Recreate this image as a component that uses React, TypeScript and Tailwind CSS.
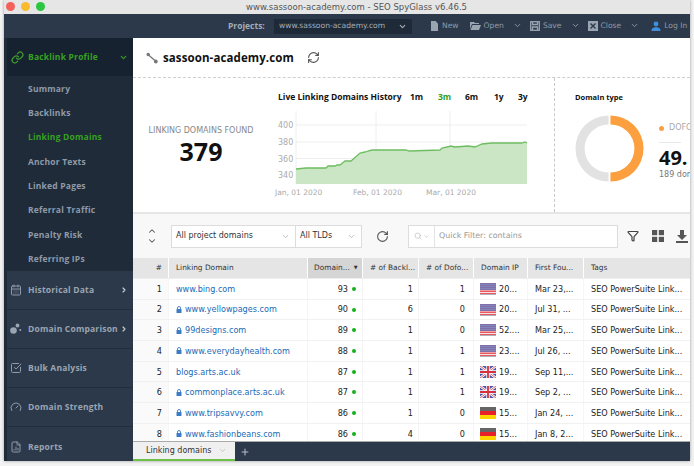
import { ChevronDown, ChevronRight, ChevronUp, Link, CalendarDays, SquareCheckBig, Gauge, FileChartColumn, RefreshCw, RotateCw, Search, Funnel, Plus } from 'lucide-react';

const subItems = ['Summary', 'Backlinks', 'Linking Domains', 'Anchor Texts', 'Linked Pages', 'Referral Traffic', 'Penalty Risk', 'Referring IPs'];

const rows = [
  { n: 1, domain: 'www.bing.com', lock: false, score: 93, back: 1, dofo: 1, flag: 'us', ip: '20...', date: 'Mar 23,...' },
  { n: 2, domain: 'www.yellowpages.com', lock: true, score: 90, back: 6, dofo: 0, flag: 'us', ip: '20...', date: 'Jul 31, ...' },
  { n: 3, domain: '99designs.com', lock: true, score: 89, back: 1, dofo: 0, flag: 'us', ip: '52....', date: 'Mar 25,...' },
  { n: 4, domain: 'www.everydayhealth.com', lock: true, score: 88, back: 1, dofo: 1, flag: 'us', ip: '23....', date: 'Jul 26, ...' },
  { n: 5, domain: 'blogs.arts.ac.uk', lock: false, score: 87, back: 1, dofo: 1, flag: 'uk', ip: '19...', date: 'Sep 11,...' },
  { n: 6, domain: 'commonplace.arts.ac.uk', lock: true, score: 87, back: 1, dofo: 1, flag: 'uk', ip: '19...', date: 'Sep 2, ...' },
  { n: 7, domain: 'www.tripsavvy.com', lock: true, score: 86, back: 1, dofo: 0, flag: 'de', ip: '15...', date: 'Jan 24, ...' },
  { n: 8, domain: 'www.fashionbeans.com', lock: true, score: 86, back: 4, dofo: 0, flag: 'de', ip: '15...', date: 'Jan 8, 2...' },
];

const linePoints = '29,66 39,65 59,65 61,63 68,63 70,62 73,62 78,58 84,58 93,50 98,49 101,48 105,47 139,47 142,48 173,47 175,45 184,43 188,44 201,43 208,44 215,41 225,40 255,40 258,39 260,40';

function Flag({ kind }: { kind: string }) {
  if (kind === 'us') {
    return (
      <svg width="16" height="12" viewBox="0 0 16 12" className="shrink-0">
        <rect width="16" height="12" fill="#f6f0f2" />
        {[0, 2, 4, 6, 8, 10].map((y) => (
          <rect key={y} y={y} width="16" height="1.1" fill="#e8585f" />
        ))}
        <rect width="16" height="7" fill="#6d74b4" opacity="0.85" />
        <rect y="7" width="16" height="1" fill="#f0a0a4" />
        <rect y="11" width="16" height="1" fill="#b0b0b8" />
      </svg>
    );
  }
  if (kind === 'uk') {
    return (
      <svg width="16" height="12" viewBox="0 0 16 12" className="shrink-0">
        <rect width="16" height="12" fill="#4a5aa8" />
        <path d="M0 0L16 12M16 0L0 12" stroke="#fff" strokeWidth="2.4" />
        <path d="M0 0L16 12M16 0L0 12" stroke="#d8404a" strokeWidth="0.8" />
        <path d="M8 0V12M0 6H16" stroke="#fff" strokeWidth="3.4" />
        <path d="M8 0V12M0 6H16" stroke="#d8303c" strokeWidth="1.8" />
      </svg>
    );
  }
  return (
    <svg width="16" height="12" viewBox="0 0 16 12" className="shrink-0">
      <rect width="16" height="4" fill="#666" />
      <rect y="4" width="16" height="4" fill="#e8202a" />
      <rect y="8" width="16" height="4" fill="#fcd400" />
    </svg>
  );
}

function Lock() {
  return (
    <svg width="6" height="7" viewBox="0 0 6 7" className="shrink-0">
      <rect x="0.5" y="3" width="5" height="4" rx="0.5" fill="#3b7cc4" />
      <path d="M1.5 3V2a1.5 1.5 0 0 1 3 0v1" fill="none" stroke="#3b7cc4" strokeWidth="0.9" />
    </svg>
  );
}

function ToolItem({ icon, label, arrow, className }: { icon: React.ReactNode; label: string; arrow?: boolean; className?: string }) {
  return (
    <div className={`flex shrink-0 items-center gap-[3px] whitespace-nowrap ${className ?? ''}`}>
      {icon}
      <span className="text-[7.6px] text-[#8e99a8]">{label}</span>
      {arrow && <ChevronDown className="ml-[6px] h-[9px] w-[9px] text-[#8e99a8]" strokeWidth={2.5} />}
    </div>
  );
}

function NavItem({ icon, label, arrow }: { icon: React.ReactNode; label: string; arrow?: boolean }) {
  return (
    <div className="flex h-[39px] items-center border-b border-[#222e3c] pl-[2px] last:border-b-0">
      <div className="flex w-[14px] justify-center text-[#8f9aa8]">{icon}</div>
      <span className="ml-[5px] whitespace-nowrap font-['Open_Sans',sans-serif] text-[8.5px] font-bold tracking-[0.2px] text-[#9aa5b2]">{label}</span>
      {arrow && <ChevronRight className="ml-auto mr-[5px] h-[8px] w-[8px] text-[#c4ccd6]" strokeWidth={3.5} />}
    </div>
  );
}

const gridCols = 'grid-cols-[35px_138px_54px_55px_54px_53px_55px_1fr]';

export default function App() {
  return (
    <div className="h-[466px] w-[694px] overflow-hidden bg-[#f3f3f3] px-[4px] pb-[5px] font-['DejaVu_Sans',sans-serif]">
      <div className="flex h-[461px] w-[686px] flex-col overflow-hidden shadow-[0_0_3px_rgba(0,0,0,0.35)]">
        {/* Title bar */}
        <div className="relative flex h-[14px] shrink-0 items-center justify-center bg-[#e6e6e6] text-[8.5px] text-[#555]">
          <div className="absolute left-[2px] top-[2px] flex gap-[6px]">
            <span className="h-[9px] w-[9px] rounded-full bg-[#f4605a]" />
            <span className="h-[9px] w-[9px] rounded-full bg-[#f8bb2e]" />
            <span className="h-[9px] w-[9px] rounded-full bg-[#2bc740]" />
          </div>
          <span className="ml-[19px]">www.sassoon-academy.com - SEO SpyGlass v6.46.5</span>
        </div>

        {/* Top toolbar */}
        <div className="flex h-[24px] shrink-0 items-center bg-[#2c394a]">
          <span className="ml-[224px] w-[36px] shrink-0 whitespace-nowrap font-['Open_Sans',sans-serif] text-[8.5px] font-bold text-[#a4adb9]">Projects:</span>
          <div className="ml-[10px] flex h-[15px] w-[138px] shrink-0 items-center justify-between whitespace-nowrap bg-[#1e2a38] pl-[5px] pr-[5px] text-[7.6px] text-[#a4adb9]">
            <span>www.sassoon-academy.com</span>
            <ChevronDown className="h-[9px] w-[9px]" strokeWidth={3} />
          </div>
          <div className="ml-[18px] flex items-center">
            <ToolItem
              label="New"
              icon={
                <svg width="9" height="10" viewBox="0 0 9 10" fill="#9aa5b2">
                  <path d="M1 0h4.5L8 2.5V10H1z" />
                </svg>
              }
            />
            <ToolItem
              label="Open"
              arrow
              className="ml-[11px]"
              icon={
                <svg width="11" height="9" viewBox="0 0 11 9" fill="#9aa5b2">
                  <path d="M0 1h4l1 1h4v1H2L0 8zM2.5 4H11L9 9H0.5z" />
                </svg>
              }
            />
            <ToolItem
              label="Save"
              arrow
              className="ml-[8px]"
              icon={
                <svg width="10" height="10" viewBox="0 0 10 10" fill="none" stroke="#9aa5b2" strokeWidth="1.3">
                  <rect x="0.7" y="0.7" width="8.6" height="8.6" />
                  <path d="M2.5 1v2.5h5V1M2.5 9V6h5v3" />
                </svg>
              }
            />
            <ToolItem
              label="Close"
              arrow
              className="ml-[8px]"
              icon={
                <svg width="10" height="10" viewBox="0 0 10 10">
                  <rect width="10" height="10" fill="#9aa5b2" />
                  <path d="M2.5 2.5l5 5M7.5 2.5l-5 5" stroke="#2c394a" strokeWidth="1.4" />
                </svg>
              }
            />
            <ToolItem
              label="Log In"
              className="ml-[12px]"
              icon={
                <svg width="10" height="10" viewBox="0 0 10 10" fill="#3f8fdc">
                  <circle cx="5" cy="3" r="2.4" />
                  <path d="M0.5 10c0-3 2-3.8 4.5-3.8S9.5 7 9.5 10z" />
                </svg>
              }
            />
          </div>
        </div>

        <div className="flex min-h-0 flex-1">
          {/* Sidebar */}
          <div className="flex w-[129px] shrink-0 flex-col bg-[#1f2b39] pl-[3px]">
            <div className="flex h-[38px] shrink-0 items-center bg-[#172230] pl-[4px]">
              <Link className="h-[13px] w-[13px] text-[#3fa02c]" strokeWidth={2.2} />
              <span className="ml-[4px] font-['Open_Sans',sans-serif] text-[8.5px] font-bold tracking-[0.2px] text-[#36a11f]">Backlink Profile</span>
              <ChevronDown className="ml-auto mr-[5px] h-[9px] w-[9px] text-[#36a11f]" strokeWidth={3} />
            </div>
            <div className="flex shrink-0 flex-col pt-[1px]">
              {subItems.map((item) => (
                <div
                  key={item}
                  className={`flex h-[24.3px] items-center pl-[21px] font-['Open_Sans',sans-serif] text-[8.5px] font-bold tracking-[0.2px] ${item === 'Linking Domains' ? 'text-[#36a11f]' : 'text-[#8f9aa8]'}`}
                >
                  {item}
                </div>
              ))}
            </div>
            <div className="flex flex-1 flex-col bg-[#2c394a]">
              <NavItem label="Historical Data" arrow icon={<CalendarDays className="h-[12px] w-[12px]" strokeWidth={2} />} />
              <NavItem
                label="Domain Comparison"
                arrow
                icon={
                  <svg width="12" height="12" viewBox="0 0 12 12" fill="#9aa5b2">
                    <circle cx="3.5" cy="7.5" r="3.3" />
                    <circle cx="7.5" cy="2.5" r="1.9" />
                    <circle cx="10.3" cy="7" r="1" />
                  </svg>
                }
              />
              <NavItem label="Bulk Analysis" icon={<SquareCheckBig className="h-[12px] w-[12px]" strokeWidth={2} />} />
              <NavItem label="Domain Strength" icon={<Gauge className="h-[12px] w-[12px]" strokeWidth={2} />} />
              <NavItem label="Reports" icon={<FileChartColumn className="h-[12px] w-[12px]" strokeWidth={2} />} />
            </div>
          </div>

          {/* Main */}
          <div className="flex min-w-0 flex-1 flex-col bg-white">
            <div className="flex h-[40px] shrink-0 items-center border-b border-dashed border-[#cfcfcf] pl-[13px]">
              <svg width="12" height="12" viewBox="0 0 12 12" stroke="#777" fill="#777">
                <path d="M2 2.5L10 9.5" strokeWidth="1.3" />
                <circle cx="2.2" cy="2.5" r="1.7" stroke="none" />
                <circle cx="9.8" cy="9.5" r="1.9" stroke="none" />
              </svg>
              <span className="ml-[5px] whitespace-nowrap font-['Open_Sans',sans-serif] text-[11.5px] font-bold tracking-[0.1px] text-[#111]">sassoon-academy.com</span>
              <RefreshCw className="ml-[13px] h-[13px] w-[13px] text-[#555]" strokeWidth={2} />
            </div>

            {/* Stats */}
            <div className="flex h-[134px] shrink-0">
              <div className="flex w-[136px] shrink-0 flex-col items-center pt-[47px]">
                <span className="whitespace-nowrap text-[8px] text-[#888]">LINKING DOMAINS FOUND</span>
                <span className="mt-[-1px] font-['Open_Sans',sans-serif] text-[25px] font-bold leading-[30px] text-[#111]">379</span>
              </div>
              <div className="flex w-[286px] shrink-0 flex-col border-r border-dashed border-[#c8c8c8] pt-[13px]">
                <div className="flex h-[12px] items-center whitespace-nowrap font-['Open_Sans',sans-serif] text-[8.5px] font-bold text-[#111]">
                  <span className="ml-[9px] w-[124px]">Live Linking Domains History</span>
                  <span className="ml-[8px] w-[28px]">1m</span>
                  <span className="w-[27px] text-[#2fa01a]">3m</span>
                  <span className="w-[29px]">6m</span>
                  <span className="w-[24px]">1y</span>
                  <span>3y</span>
                </div>
                <svg width="280" height="100" viewBox="0 0 280 100" className="ml-[-2px]" fontFamily="DejaVu Sans, sans-serif">
                  {[22, 39, 55.5, 72].map((y) => (
                    <line key={y} x1="29" x2="260" y1={y} y2={y} stroke="#eeeeee" strokeWidth="1" />
                  ))}
                  {[29, 109, 183].map((x) => (
                    <line key={x} x1={x} x2={x} y1="8" y2="81" stroke="#eeeeee" strokeWidth="1" />
                  ))}
                  <polygon points={`${linePoints} 260,81 29,81`} fill="#cbe6c4" />
                  <polyline points={linePoints} fill="none" stroke="#6fbd62" strokeWidth="1.3" />
                  {[
                    ['400', 25],
                    ['380', 42],
                    ['360', 58.5],
                    ['340', 75],
                  ].map(([t, y]) => (
                    <text key={t} x="11" y={y} fontSize="8" fill="#aaa">
                      {t}
                    </text>
                  ))}
                  <text x="8" y="92" fontSize="7.5" fill="#aaa">Jan, 01 2020</text>
                  <text x="86" y="92" fontSize="7.5" fill="#aaa">Feb, 01 2020</text>
                  <text x="159" y="92" fontSize="7.5" fill="#aaa">Mar, 01 2020</text>
                </svg>
              </div>
              <div className="flex min-w-0 flex-1 overflow-hidden pl-[20px] pt-[13px]">
                <div className="flex shrink-0 flex-col">
                  <span className="h-[12px] font-['Open_Sans',sans-serif] text-[7.5px] font-bold leading-[12px] text-[#111]">Domain type</span>
                  <svg width="69" height="69" viewBox="0 0 72 72" className="mt-[11px]">
                    <path d="M35 1.5A34.5 34.5 0 0 0 35 70.5V61A25 25 0 0 1 35 11Z" fill="#e2e2e2" />
                    <path d="M37 1.5A34.5 34.5 0 0 1 37 70.5V61A25 25 0 0 0 37 11Z" fill="#fb9f3f" />
                  </svg>
                </div>
                <div className="ml-[15px] flex shrink-0 flex-col pt-[31px]">
                  <div className="flex items-center gap-[5px] whitespace-nowrap text-[8px] text-[#aaa]">
                    <span className="h-[5px] w-[5px] shrink-0 rounded-full bg-[#fb9f3f]" />
                    <span>DOFO</span>
                  </div>
                  <div className="mt-[8px] h-px w-[22px] bg-[#e8e8e8]" />
                  <span className="mt-[3px] whitespace-nowrap font-['Open_Sans',sans-serif] text-[20px] font-bold leading-[24px] text-[#111]">49.</span>
                  <span className="whitespace-nowrap text-[8px] leading-[10px] text-[#777]">189 dom</span>
                </div>
              </div>
            </div>

            {/* Filter bar */}
            <div className="flex h-[46px] shrink-0 items-center border-t-2 border-[#e6e6e6] bg-[#f8f8f8]">
              <div className="ml-[14px] flex w-[10px] flex-col items-center text-[#555]">
                <ChevronUp className="h-[10px] w-[10px]" strokeWidth={2.5} />
                <ChevronDown className="h-[10px] w-[10px]" strokeWidth={2.5} />
              </div>
              <div className="ml-[14px] flex h-[23px] w-[125px] items-center justify-between border border-[#dcdcdc] bg-white pl-[4px] pr-[5px] text-[8px] text-[#333]">
                <span>All project domains</span>
                <ChevronDown className="h-[9px] w-[9px] text-[#aaa]" strokeWidth={2} />
              </div>
              <div className="flex h-[23px] w-[66px] items-center justify-between border border-l-0 border-[#dcdcdc] bg-white pl-[4px] pr-[5px] text-[8px] text-[#333]">
                <span>All TLDs</span>
                <ChevronDown className="h-[9px] w-[9px] text-[#aaa]" strokeWidth={2} />
              </div>
              <RotateCw className="ml-[14px] h-[13px] w-[13px] text-[#555]" strokeWidth={2} />
              <div className="ml-[19px] flex h-[23px] w-[210px] items-center border border-[#dcdcdc] bg-white text-[7.9px] text-[#999]">
                <div className="flex h-full w-[26px] items-center justify-center gap-[1px] border-r border-[#e4e4e4] text-[#bbb]">
                  <Search className="h-[8px] w-[8px]" strokeWidth={2} />
                  <ChevronDown className="h-[7px] w-[7px]" strokeWidth={2} />
                </div>
                <span className="ml-[4px]">Quick Filter: contains</span>
              </div>
              <Funnel className="ml-[9px] h-[12px] w-[12px] text-[#444]" strokeWidth={2.4} />
              <svg width="12" height="12" viewBox="0 0 12 12" fill="#555" className="ml-[13px]">
                <rect width="5.2" height="5.2" />
                <rect x="6.8" width="5.2" height="5.2" />
                <rect y="6.8" width="5.2" height="5.2" />
                <rect x="6.8" y="6.8" width="5.2" height="5.2" />
              </svg>
              <svg width="12" height="13" viewBox="0 0 12 13" fill="#555" className="ml-[12px]">
                <path d="M4 0h4v5h3L6 10 1 5h3z" />
                <rect y="11" width="12" height="2" />
              </svg>
            </div>

            {/* Table */}
            <div className="min-h-0 flex-1 overflow-hidden text-[8.1px] text-[#222]">
              <div className={`grid h-[21px] ${gridCols} gap-x-px border-b border-[#eee] bg-white text-[7.4px] text-[#333]`}>
                <div className="flex items-center justify-end bg-[#e5e5e5] pr-[6px]">#</div>
                <div className="flex items-center bg-[#e5e5e5] pl-[7px]">Linking Domain</div>
                <div className="flex items-center gap-[4px] bg-[#d5d5d5] pl-[6px]">
                  <span>Domain...</span>
                  <span className="text-[5px]">▼</span>
                </div>
                <div className="flex items-center bg-[#e5e5e5] pl-[7px]">
                  <span className="whitespace-nowrap"># of Backl...</span>
                </div>
                <div className="flex items-center bg-[#e5e5e5] pl-[7px]">
                  <span className="whitespace-nowrap"># of Dofo...</span>
                </div>
                <div className="flex items-center bg-[#e5e5e5] pl-[7px]">Domain IP</div>
                <div className="flex items-center bg-[#e5e5e5] pl-[7px]">First Fou...</div>
                <div className="flex items-center bg-[#e5e5e5] pl-[7px]">Tags</div>
              </div>
              {rows.map((r) => (
                <div key={r.n} className={`grid h-[20.7px] ${gridCols} gap-x-px border-b border-[#f1f1f1] bg-[#f5f5f5]`}>
                  <div className="flex items-center justify-end bg-[#fafafa] pr-[6px]">{r.n}</div>
                  <div className="flex items-center gap-[3px] overflow-hidden whitespace-nowrap bg-white pl-[7px] text-[#1a69b5]">
                    {r.lock && <Lock />}
                    <span>{r.domain}</span>
                  </div>
                  <div className="flex items-center justify-end gap-[4px] bg-white pr-[6px]">
                    <span>{r.score}</span>
                    <span className="h-[4px] w-[4px] rounded-full bg-[#14b01e]" />
                  </div>
                  <div className="flex items-center justify-end bg-white pr-[5px]">{r.back}</div>
                  <div className="flex items-center justify-end bg-white pr-[8px]">{r.dofo}</div>
                  <div className="flex items-center gap-[3px] overflow-hidden whitespace-nowrap bg-white pl-[6px]">
                    <Flag kind={r.flag} />
                    <span>{r.ip}</span>
                  </div>
                  <div className="flex items-center overflow-hidden whitespace-nowrap bg-white pl-[7px]">{r.date}</div>
                  <div className="flex items-center overflow-hidden whitespace-nowrap bg-white pl-[7px]">SEO PowerSuite Link...</div>
                </div>
              ))}
            </div>

            {/* Tab bar */}
            <div className="flex h-[20px] shrink-0 items-stretch border-t border-[#aaa] bg-[#2c394a]">
              <div className="flex w-[102px] items-center border-b-2 border-[#6cc04a] bg-[#f0f0f0] pl-[13px] text-[8px] text-[#333]">
                <span>Linking domains</span>
                <ChevronDown className="ml-[7px] h-[9px] w-[9px] text-[#bbb]" strokeWidth={2} />
              </div>
              <Plus className="ml-[5px] h-[10px] w-[10px] self-center text-[#b4bcc8]" strokeWidth={2.5} />
            </div>
          </div>
        </div>
      </div>
    </div>
  );
}
